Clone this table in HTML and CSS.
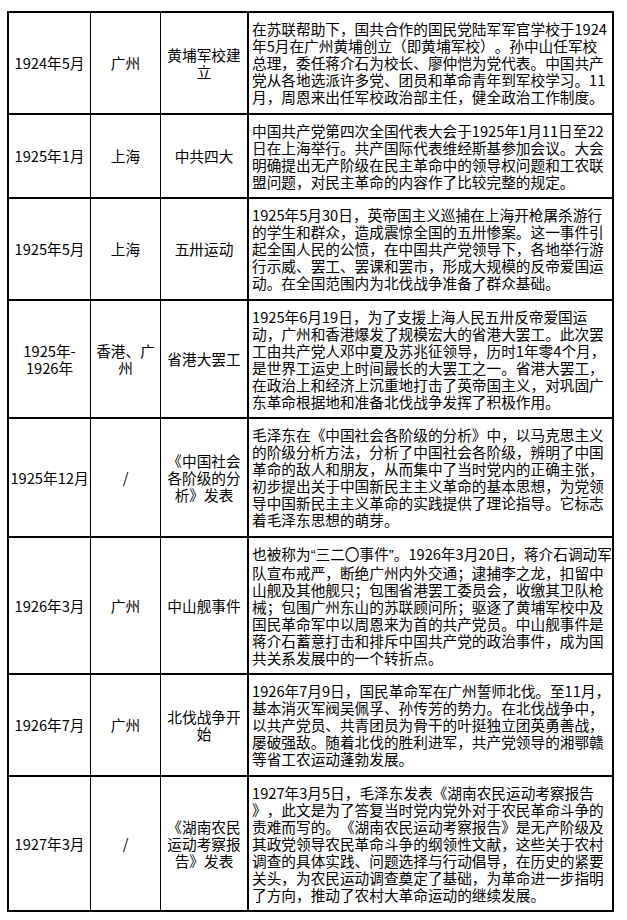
FILE: index.html
```html
<!DOCTYPE html>
<html lang="zh-CN">
<head>
<meta charset="utf-8">
<title>大革命时期大事记</title>
<link rel="stylesheet" href="styles.css">
</head>
<body>
<div class="sheet">
  <div class="c c1">1924年5月</div>
  <div class="c c2">广州</div>
  <div class="c c3">黄埔军校建<br>立</div>
  <div class="c c4">在苏联帮助下，国共合作的国民党陆军军官学校于1924<br>年5月在广州黄埔创立（即黄埔军校）。孙中山任军校<br>总理，委任蒋介石为校长、廖仲恺为党代表。中国共产<br>党从各地选派许多党、团员和革命青年到军校学习。11<br>月，周恩来出任军校政治部主任，健全政治工作制度。</div>

  <div class="c c1">1925年1月</div>
  <div class="c c2">上海</div>
  <div class="c c3">中共四大</div>
  <div class="c c4">中国共产党第四次全国代表大会于1925年1月11日至22<br>日在上海举行。共产国际代表维经斯基参加会议。大会<br>明确提出无产阶级在民主革命中的领导权问题和工农联<br>盟问题，对民主革命的内容作了比较完整的规定。</div>

  <div class="c c1">1925年5月</div>
  <div class="c c2">上海</div>
  <div class="c c3">五卅运动</div>
  <div class="c c4">1925年5月30日，英帝国主义巡捕在上海开枪屠杀游行<br>的学生和群众，造成震惊全国的五卅惨案。这一事件引<br>起全国人民的公愤，在中国共产党领导下，各地举行游<br>行示威、罢工、罢课和罢市，形成大规模的反帝爱国运<br>动。在全国范围内为北伐战争准备了群众基础。</div>

  <div class="c c1">1925年-<br>1926年</div>
  <div class="c c2">香港、广<br>州</div>
  <div class="c c3">省港大罢工</div>
  <div class="c c4">1925年6月19日，为了支援上海人民五卅反帝爱国运<br>动，广州和香港爆发了规模宏大的省港大罢工。此次罢<br>工由共产党人邓中夏及苏兆征领导，历时1年零4个月，<br>是世界工运史上时间最长的大罢工之一。省港大罢工，<br>在政治上和经济上沉重地打击了英帝国主义，对巩固广<br>东革命根据地和准备北伐战争发挥了积极作用。</div>

  <div class="c c1">1925年12月</div>
  <div class="c c2">/</div>
  <div class="c c3">《中国社会<br>各阶级的分<br>析》发表</div>
  <div class="c c4">毛泽东在《中国社会各阶级的分析》中，以马克思主义<br>的阶级分析方法，分析了中国社会各阶级，辨明了中国<br>革命的敌人和朋友，从而集中了当时党内的正确主张，<br>初步提出关于中国新民主主义革命的基本思想，为党领<br>导中国新民主主义革命的实践提供了理论指导。它标志<br>着毛泽东思想的萌芽。</div>

  <div class="c c1">1926年3月</div>
  <div class="c c2">广州</div>
  <div class="c c3">中山舰事件</div>
  <div class="c c4">也被称为<span class="q">“</span>三二〇事件<span class="q">”</span>。1926年3月20日，蒋介石调动军<br>队宣布戒严，断绝广州内外交通；逮捕李之龙，扣留中<br>山舰及其他舰只；包围省港罢工委员会，收缴其卫队枪<br>械；包围广州东山的苏联顾问所；驱逐了黄埔军校中及<br>国民革命军中以周恩来为首的共产党员。中山舰事件是<br>蒋介石蓄意打击和排斥中国共产党的政治事件，成为国<br>共关系发展中的一个转折点。</div>

  <div class="c c1">1926年7月</div>
  <div class="c c2">广州</div>
  <div class="c c3">北伐战争开<br>始</div>
  <div class="c c4">1926年7月9日，国民革命军在广州誓师北伐。至11月，<br>基本消灭军阀吴佩孚、孙传芳的势力。在北伐战争中，<br>以共产党员、共青团员为骨干的叶挺独立团英勇善战，<br>屡破强敌。随着北伐的胜利进军，共产党领导的湘鄂赣<br>等省工农运动蓬勃发展。</div>

  <div class="c c1">1927年3月</div>
  <div class="c c2">/</div>
  <div class="c c3">《湖南农民<br>运动考察报<br>告》发表</div>
  <div class="c c4">1927年3月5日，毛泽东发表《湖南农民运动考察报告<br>》，此文是为了答复当时党内党外对于农民革命斗争的<br>责难而写的。《湖南农民运动考察报告》是无产阶级及<br>其政党领导农民革命斗争的纲领性文献，这些关于农村<br>调查的具体实践、问题选择与行动倡导，在历史的紧要<br>关头，为农民运动调查奠定了基础，为革命进一步指明<br>了方向，推动了农村大革命运动的继续发展。</div>
</div>
</body>
</html>
```

FILE: styles.css
```css
html, body {
  margin: 0;
  padding: 0;
  background: #ffffff;
}

body {
  font-family: "Noto Sans CJK SC", "Noto Sans", sans-serif;
  font-size: 14.67px;
  line-height: 17px;
  color: #000000;
  text-spacing-trim: space-all;
}

.sheet {
  display: grid;
  grid-template-columns: 82px 70px 88px 365px;
  width: 605px;
  margin: 11px 0 0 7px;
  border-left: 2px solid #000;
  border-top: 2px solid #000;
}

.c {
  border-bottom: 2px solid #000;
  padding: 7px 0 7.5px;
  white-space: nowrap;
}

.c1, .c2, .c3 {
  display: flex;
  align-items: center;
  justify-content: center;
  text-align: center;
}

.c1, .c2 {
  border-right: 1px solid #000;
}

.c3 {
  border-right: 2px solid #000;
}

.c4 {
  border-right: 2px solid #000;
  padding-left: 3px;
  text-align: left;
}

.q {
  font-family: "Liberation Sans", sans-serif;
}
```
